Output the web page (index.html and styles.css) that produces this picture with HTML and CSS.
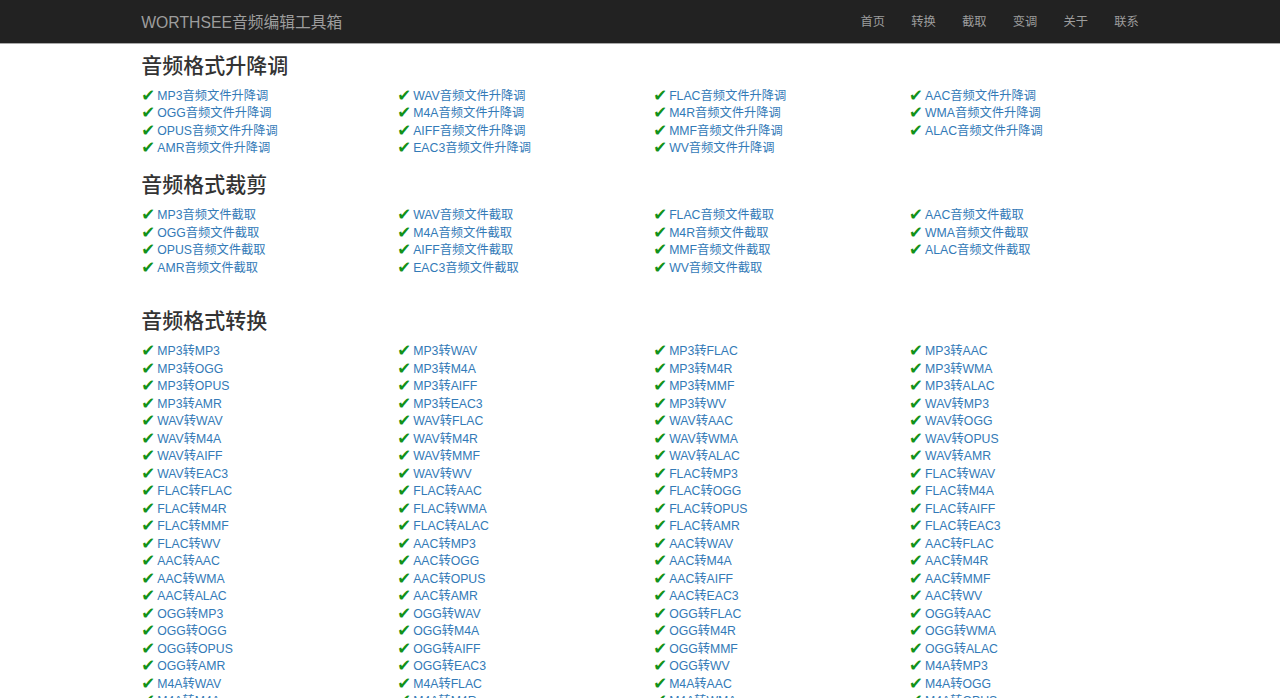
FILE: index.html
```html
<!DOCTYPE html>
<html lang="zh-CN">
<head>
<meta charset="utf-8">
<title>WORTHSEE音频编辑工具箱</title>
<link rel="stylesheet" href="styles.css">
</head>
<body>
<nav class="navbar">
  <div class="container nav-inner">
    <a class="brand" href="#">WORTHSEE音频编辑工具箱</a>
    <ul class="nav-links">
      <li><a href="#">首页</a></li>
      <li><a href="#">转换</a></li>
      <li><a href="#">截取</a></li>
      <li><a href="#">变调</a></li>
      <li><a href="#">关于</a></li>
      <li><a href="#">联系</a></li>
    </ul>
  </div>
</nav>
<main class="container">
  <section class="section first">
    <h3 class="title">音频格式升降调</h3>
    <ul class="links">
      <li><a href="#">MP3音频文件升降调</a></li>
      <li><a href="#">WAV音频文件升降调</a></li>
      <li><a href="#">FLAC音频文件升降调</a></li>
      <li><a href="#">AAC音频文件升降调</a></li>
      <li><a href="#">OGG音频文件升降调</a></li>
      <li><a href="#">M4A音频文件升降调</a></li>
      <li><a href="#">M4R音频文件升降调</a></li>
      <li><a href="#">WMA音频文件升降调</a></li>
      <li><a href="#">OPUS音频文件升降调</a></li>
      <li><a href="#">AIFF音频文件升降调</a></li>
      <li><a href="#">MMF音频文件升降调</a></li>
      <li><a href="#">ALAC音频文件升降调</a></li>
      <li><a href="#">AMR音频文件升降调</a></li>
      <li><a href="#">EAC3音频文件升降调</a></li>
      <li><a href="#">WV音频文件升降调</a></li>
    </ul>
  </section>
  <section class="section">
    <h3 class="title">音频格式裁剪</h3>
    <ul class="links">
      <li><a href="#">MP3音频文件截取</a></li>
      <li><a href="#">WAV音频文件截取</a></li>
      <li><a href="#">FLAC音频文件截取</a></li>
      <li><a href="#">AAC音频文件截取</a></li>
      <li><a href="#">OGG音频文件截取</a></li>
      <li><a href="#">M4A音频文件截取</a></li>
      <li><a href="#">M4R音频文件截取</a></li>
      <li><a href="#">WMA音频文件截取</a></li>
      <li><a href="#">OPUS音频文件截取</a></li>
      <li><a href="#">AIFF音频文件截取</a></li>
      <li><a href="#">MMF音频文件截取</a></li>
      <li><a href="#">ALAC音频文件截取</a></li>
      <li><a href="#">AMR音频文件截取</a></li>
      <li><a href="#">EAC3音频文件截取</a></li>
      <li><a href="#">WV音频文件截取</a></li>
    </ul>
  </section>
  <section class="section spaced">
    <h3 class="title">音频格式转换</h3>
    <ul class="links">
      <li><a href="#">MP3转MP3</a></li><li><a href="#">MP3转WAV</a></li><li><a href="#">MP3转FLAC</a></li><li><a href="#">MP3转AAC</a></li><li><a href="#">MP3转OGG</a></li><li><a href="#">MP3转M4A</a></li><li><a href="#">MP3转M4R</a></li><li><a href="#">MP3转WMA</a></li><li><a href="#">MP3转OPUS</a></li><li><a href="#">MP3转AIFF</a></li><li><a href="#">MP3转MMF</a></li><li><a href="#">MP3转ALAC</a></li><li><a href="#">MP3转AMR</a></li><li><a href="#">MP3转EAC3</a></li><li><a href="#">MP3转WV</a></li>
      <li><a href="#">WAV转MP3</a></li><li><a href="#">WAV转WAV</a></li><li><a href="#">WAV转FLAC</a></li><li><a href="#">WAV转AAC</a></li><li><a href="#">WAV转OGG</a></li><li><a href="#">WAV转M4A</a></li><li><a href="#">WAV转M4R</a></li><li><a href="#">WAV转WMA</a></li><li><a href="#">WAV转OPUS</a></li><li><a href="#">WAV转AIFF</a></li><li><a href="#">WAV转MMF</a></li><li><a href="#">WAV转ALAC</a></li><li><a href="#">WAV转AMR</a></li><li><a href="#">WAV转EAC3</a></li><li><a href="#">WAV转WV</a></li>
      <li><a href="#">FLAC转MP3</a></li><li><a href="#">FLAC转WAV</a></li><li><a href="#">FLAC转FLAC</a></li><li><a href="#">FLAC转AAC</a></li><li><a href="#">FLAC转OGG</a></li><li><a href="#">FLAC转M4A</a></li><li><a href="#">FLAC转M4R</a></li><li><a href="#">FLAC转WMA</a></li><li><a href="#">FLAC转OPUS</a></li><li><a href="#">FLAC转AIFF</a></li><li><a href="#">FLAC转MMF</a></li><li><a href="#">FLAC转ALAC</a></li><li><a href="#">FLAC转AMR</a></li><li><a href="#">FLAC转EAC3</a></li><li><a href="#">FLAC转WV</a></li>
      <li><a href="#">AAC转MP3</a></li><li><a href="#">AAC转WAV</a></li><li><a href="#">AAC转FLAC</a></li><li><a href="#">AAC转AAC</a></li><li><a href="#">AAC转OGG</a></li><li><a href="#">AAC转M4A</a></li><li><a href="#">AAC转M4R</a></li><li><a href="#">AAC转WMA</a></li><li><a href="#">AAC转OPUS</a></li><li><a href="#">AAC转AIFF</a></li><li><a href="#">AAC转MMF</a></li><li><a href="#">AAC转ALAC</a></li><li><a href="#">AAC转AMR</a></li><li><a href="#">AAC转EAC3</a></li><li><a href="#">AAC转WV</a></li>
      <li><a href="#">OGG转MP3</a></li><li><a href="#">OGG转WAV</a></li><li><a href="#">OGG转FLAC</a></li><li><a href="#">OGG转AAC</a></li><li><a href="#">OGG转OGG</a></li><li><a href="#">OGG转M4A</a></li><li><a href="#">OGG转M4R</a></li><li><a href="#">OGG转WMA</a></li><li><a href="#">OGG转OPUS</a></li><li><a href="#">OGG转AIFF</a></li><li><a href="#">OGG转MMF</a></li><li><a href="#">OGG转ALAC</a></li><li><a href="#">OGG转AMR</a></li><li><a href="#">OGG转EAC3</a></li><li><a href="#">OGG转WV</a></li>
      <li><a href="#">M4A转MP3</a></li><li><a href="#">M4A转WAV</a></li><li><a href="#">M4A转FLAC</a></li><li><a href="#">M4A转AAC</a></li><li><a href="#">M4A转OGG</a></li><li><a href="#">M4A转M4A</a></li><li><a href="#">M4A转M4R</a></li><li><a href="#">M4A转WMA</a></li><li><a href="#">M4A转OPUS</a></li><li><a href="#">M4A转AIFF</a></li><li><a href="#">M4A转MMF</a></li><li><a href="#">M4A转ALAC</a></li><li><a href="#">M4A转AMR</a></li><li><a href="#">M4A转EAC3</a></li><li><a href="#">M4A转WV</a></li>
      <li><a href="#">M4R转MP3</a></li><li><a href="#">M4R转WAV</a></li><li><a href="#">M4R转FLAC</a></li><li><a href="#">M4R转AAC</a></li><li><a href="#">M4R转OGG</a></li><li><a href="#">M4R转M4A</a></li><li><a href="#">M4R转M4R</a></li><li><a href="#">M4R转WMA</a></li><li><a href="#">M4R转OPUS</a></li><li><a href="#">M4R转AIFF</a></li><li><a href="#">M4R转MMF</a></li><li><a href="#">M4R转ALAC</a></li><li><a href="#">M4R转AMR</a></li><li><a href="#">M4R转EAC3</a></li><li><a href="#">M4R转WV</a></li>
      <li><a href="#">WMA转MP3</a></li><li><a href="#">WMA转WAV</a></li><li><a href="#">WMA转FLAC</a></li><li><a href="#">WMA转AAC</a></li><li><a href="#">WMA转OGG</a></li><li><a href="#">WMA转M4A</a></li><li><a href="#">WMA转M4R</a></li><li><a href="#">WMA转WMA</a></li><li><a href="#">WMA转OPUS</a></li><li><a href="#">WMA转AIFF</a></li><li><a href="#">WMA转MMF</a></li><li><a href="#">WMA转ALAC</a></li><li><a href="#">WMA转AMR</a></li><li><a href="#">WMA转EAC3</a></li><li><a href="#">WMA转WV</a></li>
      <li><a href="#">OPUS转MP3</a></li><li><a href="#">OPUS转WAV</a></li><li><a href="#">OPUS转FLAC</a></li><li><a href="#">OPUS转AAC</a></li><li><a href="#">OPUS转OGG</a></li><li><a href="#">OPUS转M4A</a></li><li><a href="#">OPUS转M4R</a></li><li><a href="#">OPUS转WMA</a></li><li><a href="#">OPUS转OPUS</a></li><li><a href="#">OPUS转AIFF</a></li><li><a href="#">OPUS转MMF</a></li><li><a href="#">OPUS转ALAC</a></li><li><a href="#">OPUS转AMR</a></li><li><a href="#">OPUS转EAC3</a></li><li><a href="#">OPUS转WV</a></li>
      <li><a href="#">AIFF转MP3</a></li><li><a href="#">AIFF转WAV</a></li><li><a href="#">AIFF转FLAC</a></li><li><a href="#">AIFF转AAC</a></li><li><a href="#">AIFF转OGG</a></li><li><a href="#">AIFF转M4A</a></li><li><a href="#">AIFF转M4R</a></li><li><a href="#">AIFF转WMA</a></li><li><a href="#">AIFF转OPUS</a></li><li><a href="#">AIFF转AIFF</a></li><li><a href="#">AIFF转MMF</a></li><li><a href="#">AIFF转ALAC</a></li><li><a href="#">AIFF转AMR</a></li><li><a href="#">AIFF转EAC3</a></li><li><a href="#">AIFF转WV</a></li>
      <li><a href="#">MMF转MP3</a></li><li><a href="#">MMF转WAV</a></li><li><a href="#">MMF转FLAC</a></li><li><a href="#">MMF转AAC</a></li><li><a href="#">MMF转OGG</a></li><li><a href="#">MMF转M4A</a></li><li><a href="#">MMF转M4R</a></li><li><a href="#">MMF转WMA</a></li><li><a href="#">MMF转OPUS</a></li><li><a href="#">MMF转AIFF</a></li><li><a href="#">MMF转MMF</a></li><li><a href="#">MMF转ALAC</a></li><li><a href="#">MMF转AMR</a></li><li><a href="#">MMF转EAC3</a></li><li><a href="#">MMF转WV</a></li>
      <li><a href="#">ALAC转MP3</a></li><li><a href="#">ALAC转WAV</a></li><li><a href="#">ALAC转FLAC</a></li><li><a href="#">ALAC转AAC</a></li><li><a href="#">ALAC转OGG</a></li><li><a href="#">ALAC转M4A</a></li><li><a href="#">ALAC转M4R</a></li><li><a href="#">ALAC转WMA</a></li><li><a href="#">ALAC转OPUS</a></li><li><a href="#">ALAC转AIFF</a></li><li><a href="#">ALAC转MMF</a></li><li><a href="#">ALAC转ALAC</a></li><li><a href="#">ALAC转AMR</a></li><li><a href="#">ALAC转EAC3</a></li><li><a href="#">ALAC转WV</a></li>
      <li><a href="#">AMR转MP3</a></li><li><a href="#">AMR转WAV</a></li><li><a href="#">AMR转FLAC</a></li><li><a href="#">AMR转AAC</a></li><li><a href="#">AMR转OGG</a></li><li><a href="#">AMR转M4A</a></li><li><a href="#">AMR转M4R</a></li><li><a href="#">AMR转WMA</a></li><li><a href="#">AMR转OPUS</a></li><li><a href="#">AMR转AIFF</a></li><li><a href="#">AMR转MMF</a></li><li><a href="#">AMR转ALAC</a></li><li><a href="#">AMR转AMR</a></li><li><a href="#">AMR转EAC3</a></li><li><a href="#">AMR转WV</a></li>
      <li><a href="#">EAC3转MP3</a></li><li><a href="#">EAC3转WAV</a></li><li><a href="#">EAC3转FLAC</a></li><li><a href="#">EAC3转AAC</a></li><li><a href="#">EAC3转OGG</a></li><li><a href="#">EAC3转M4A</a></li><li><a href="#">EAC3转M4R</a></li><li><a href="#">EAC3转WMA</a></li><li><a href="#">EAC3转OPUS</a></li><li><a href="#">EAC3转AIFF</a></li><li><a href="#">EAC3转MMF</a></li><li><a href="#">EAC3转ALAC</a></li><li><a href="#">EAC3转AMR</a></li><li><a href="#">EAC3转EAC3</a></li><li><a href="#">EAC3转WV</a></li>
      <li><a href="#">WV转MP3</a></li><li><a href="#">WV转WAV</a></li><li><a href="#">WV转FLAC</a></li><li><a href="#">WV转AAC</a></li><li><a href="#">WV转OGG</a></li><li><a href="#">WV转M4A</a></li><li><a href="#">WV转M4R</a></li><li><a href="#">WV转WMA</a></li><li><a href="#">WV转OPUS</a></li><li><a href="#">WV转AIFF</a></li><li><a href="#">WV转MMF</a></li><li><a href="#">WV转ALAC</a></li><li><a href="#">WV转AMR</a></li><li><a href="#">WV转EAC3</a></li><li><a href="#">WV转WV</a></li>
    </ul>
  </section>
</main>
</body>
</html>
```

FILE: styles.css
```css
* { box-sizing: border-box; }

html, body {
  margin: 0;
  padding: 0;
}

body {
  font-family: "Liberation Sans", "Noto Sans CJK SC", sans-serif;
  font-size: 12.25px;
  line-height: 17.5px;
  color: #333;
  background: #fff;
}

a { text-decoration: none; }

.container {
  width: 1023.75px;
  margin: 0 auto;
  padding: 0 13.125px;
}

.navbar {
  background: #222;
  height: 44px;
  border-bottom: 1px solid #a9a9a9;
}

.nav-inner {
  display: flex;
  justify-content: space-between;
  align-items: flex-start;
  height: 43px;
}

.brand {
  color: #9d9d9d;
  font-size: 15.75px;
  line-height: 17.5px;
  padding: 13.5px 0 11.5px;
}

.nav-links {
  list-style: none;
  margin: 0 -13.125px 0 0;
  padding: 0;
  display: flex;
}

.nav-links a {
  display: block;
  color: #9d9d9d;
  font-size: 12.25px;
  line-height: 17.5px;
  padding: 13.5px 13.125px 11.5px;
}

.title {
  font-size: 21px;
  line-height: 23.1px;
  font-weight: 500;
  color: #333;
  margin: 17.5px 0 8.75px;
}

.section.first .title { margin-top: 10px; }

.section.spaced { padding-top: 16.5px; }

.links {
  list-style: none;
  margin: 0 -13.125px;
  padding: 0;
  display: grid;
  grid-template-columns: repeat(4, 1fr);
  grid-auto-rows: 17.5px;
}

.links li {
  display: flex;
  align-items: center;
  height: 17.5px;
  padding: 3px 13.125px 0;
  white-space: nowrap;
}

.links li::before {
  content: "\2714";
  flex: 0 0 16px;
  font-family: "DejaVu Sans", sans-serif;
  font-size: 16.5px;
  line-height: 14.5px;
  color: #12921a;
}

.links a {
  color: #337ab7;
  line-height: 14.5px;
}
```
